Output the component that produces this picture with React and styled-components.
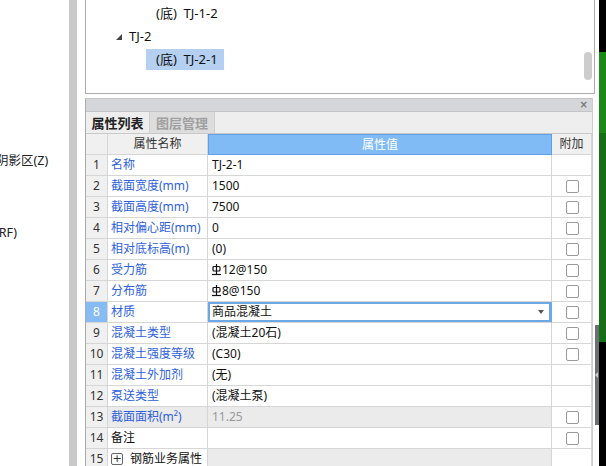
import React from 'react';
import styled, { createGlobalStyle, css } from 'styled-components';

const GlobalStyle = createGlobalStyle`
  html, body {
    margin: 0;
    padding: 0;
    width: 606px;
    height: 466px;
    overflow: hidden;
    background: #fff;
  }
  body {
    font-family: "Noto Sans", "Noto Sans CJK SC", sans-serif;
    font-size: 13px;
    color: #111;
  }
`;

const Page = styled.div`
  display: flex;
  width: 606px;
  height: 466px;
  overflow: hidden;
  background: #fff;
`;

const LeftPane = styled.div`
  width: 69px;
  flex-shrink: 0;
  overflow: hidden;
  display: flex;
  flex-direction: column;
  padding-top: 152px;
  gap: 54px;
  box-sizing: border-box;
`;

const CutLabel = styled.div`
  white-space: nowrap;
  font-size: 12.5px;
  line-height: 18px;
  color: #222;
  margin-left: ${(p) => p.$shift}px;
`;

const Splitter = styled.div`
  width: 8px;
  flex-shrink: 0;
  background: #c9c9c9;
`;

const Gutter = styled.div`
  width: 8px;
  flex-shrink: 0;
`;

const Main = styled.div`
  width: 510px;
  flex-shrink: 0;
  display: flex;
  flex-direction: column;
  gap: 4px;
`;

const TreePanel = styled.div`
  position: relative;
  height: 94px;
  flex-shrink: 0;
  box-sizing: border-box;
  border: 1px solid #ababab;
  border-top: none;
  padding-top: 2px;
`;

const TreeItem = styled.div`
  height: 23px;
  display: flex;
  align-items: center;
  padding-left: ${(p) => p.$indent}px;
  white-space: nowrap;
  line-height: 21px;
`;

const TreeLabel = styled.span`
  height: 21px;
  padding: 0 6px 0 10px;
  background: ${(p) => (p.$selected ? '#b4cff0' : 'transparent')};
`;

const Expander = styled.svg`
  width: 6px;
  height: 6px;
  margin-right: 7px;
`;

const ScrollThumb = styled.div`
  position: absolute;
  right: 2px;
  top: 52px;
  width: 8px;
  height: 28px;
  border-radius: 4px;
  background: #cdcdcd;
`;

const PropPanel = styled.div`
  flex: 1;
  margin-right: 2px;
  border-left: 1px solid #ababab;
  border-right: 1px solid #cdcdcd;
  border-top: 1px solid #c6c6c6;
  display: flex;
  flex-direction: column;
  overflow: hidden;
`;

const TitleBar = styled.div`
  height: 12px;
  flex-shrink: 0;
  background: #d5d6da;
  border-bottom: 1px solid #c4c5c9;
  display: flex;
  justify-content: flex-end;
  align-items: center;
  padding-right: 4px;
`;

const CloseMark = styled.span`
  font-family: "DejaVu Sans", sans-serif;
  font-size: 10px;
  line-height: 10px;
  color: #777;
  font-weight: bold;
`;

const TabRow = styled.div`
  height: 21px;
  flex-shrink: 0;
  display: flex;
  background: #eeeeee;
`;

const Tab = styled.div`
  width: ${(p) => p.$w}px;
  box-sizing: border-box;
  border-right: 1px solid #cfcfcf;
  display: flex;
  align-items: center;
  justify-content: center;
  font-size: 13px;
  font-weight: 600;
  color: ${(p) => (p.$active ? '#222' : '#a0a0a0')};
  background: ${(p) => (p.$active ? '#eeeeee' : '#dddddd')};
`;

const Table = styled.div`
  display: grid;
  grid-template-columns: 22px 100px 344px 40px;
  grid-auto-rows: 21px;
  border-top: 1px solid #c9c9c9;
  font-size: 12px;
`;

const cellBase = css`
  box-sizing: border-box;
  border-right: 1px solid #d6d6d6;
  border-bottom: 1px solid #d6d6d6;
  display: flex;
  align-items: center;
  white-space: nowrap;
  overflow: hidden;
  line-height: 18px;
`;

const HeadCell = styled.div`
  ${cellBase}
  justify-content: center;
  background: ${(p) => (p.$blue ? '#80bbf6' : '#f0f0f0')};
  color: ${(p) => (p.$blue ? '#fff' : '#333')};
  ${(p) => p.$blue && css`border: 1px solid #5e9fe6;`}
`;

const NumCell = styled.div`
  ${cellBase}
  justify-content: center;
  font-size: 12px;
  background: ${(p) => (p.$selected ? '#86bcf3' : '#f0f0f0')};
  color: ${(p) => (p.$selected ? '#fff' : '#333')};
`;

const NameCell = styled.div`
  ${cellBase}
  padding-left: 3px;
  color: ${(p) => (p.$plain ? '#111' : '#2f5fdc')};
  background: ${(p) => (p.$gray ? '#ebebeb' : '#fff')};
`;

const ValueCell = styled.div`
  ${cellBase}
  position: relative;
  padding-left: 4px;
  color: ${(p) => (p.$gray ? '#9a9a9a' : '#111')};
  background: ${(p) => (p.$gray ? '#ebebeb' : '#fff')};
  ${(p) =>
    p.$editing &&
    css`
      box-shadow: inset 0 0 0 2px #6ca8e6;
      border-right-color: #6ca8e6;
    `}
`;

const DropArrow = styled.span`
  position: absolute;
  right: 7px;
  top: 8px;
  width: 0;
  height: 0;
  border-left: 3px solid transparent;
  border-right: 3px solid transparent;
  border-top: 4px solid #555;
`;

const AddCell = styled.div`
  ${cellBase}
  justify-content: center;
  background: #fff;
`;

const CheckBox = styled.span`
  width: 13px;
  height: 13px;
  box-sizing: border-box;
  border: 1px solid #9a9a9a;
  border-radius: 2px;
  margin-left: 1px;
`;

const PlusBox = styled.span`
  width: 12px;
  height: 12px;
  box-sizing: border-box;
  border: 1px solid #666;
  border-radius: 2px;
  display: flex;
  align-items: center;
  justify-content: center;
  font-family: "DejaVu Sans", sans-serif;
  font-size: 11px;
  line-height: 10px;
  color: #333;
  margin-right: 7px;
`;

const BarMark = styled.svg`
  width: 9px;
  height: 12px;
  margin-right: 1px;
`;

const RightEdge = styled.div`
  display: flex;
  flex-shrink: 0;
  width: 11px;
`;

const SideSplit = styled.div`
  width: 4px;
  display: flex;
  flex-direction: column;
`;

const SplitHandle = styled.div`
  margin-top: 325px;
  height: 100px;
  background: #6b7075;
  display: flex;
  align-items: center;
`;

const HandleArrow = styled.span`
  width: 0;
  height: 0;
  border-top: 3px solid transparent;
  border-bottom: 3px solid transparent;
  border-right: 3px solid #c8ccd0;
`;

const ColorStrip = styled.div`
  width: 7px;
  display: flex;
  flex-direction: column;
`;

const Band = styled.div`
  height: ${(p) => p.$h}px;
  flex-shrink: 0;
  background: ${(p) => p.$c};
  ${(p) => p.$grow && 'flex: 1;'}
`;

const RebarMark = () => (
  <BarMark viewBox="0 0 9 12">
    <rect x="1" y="2.5" width="7" height="4.5" rx="1" fill="none" stroke="#111" strokeWidth="1.2" />
    <line x1="4.5" y1="0" x2="4.5" y2="10" stroke="#111" strokeWidth="1.2" />
    <line x1="0" y1="10.5" x2="9" y2="10.5" stroke="#111" strokeWidth="1.2" />
  </BarMark>
);

const rows = [
  { n: 1, name: '名称', value: 'TJ-2-1', check: false },
  { n: 2, name: '截面宽度(mm)', value: '1500', check: true },
  { n: 3, name: '截面高度(mm)', value: '7500', check: true },
  { n: 4, name: '相对偏心距(mm)', value: '0', check: true },
  { n: 5, name: '相对底标高(m)', value: '(0)', check: true },
  { n: 6, name: '受力筋', value: '12@150', rebar: true, check: true },
  { n: 7, name: '分布筋', value: '8@150', rebar: true, check: true },
  { n: 8, name: '材质', value: '商品混凝土', check: true, editing: true },
  { n: 9, name: '混凝土类型', value: '(混凝土20石)', check: true },
  { n: 10, name: '混凝土强度等级', value: '(C30)', check: true },
  { n: 11, name: '混凝土外加剂', value: '(无)', check: false },
  { n: 12, name: '泵送类型', value: '(混凝土泵)', check: false },
  { n: 13, name: '截面面积(m²)', value: '11.25', check: true, gray: true },
  { n: 14, name: '备注', value: '', check: true, plain: true },
  { n: 15, name: '钢筋业务属性', value: '', check: false, plain: true, group: true },
];

const App = () => (
  <Page>
    <GlobalStyle />
    <LeftPane>
      <CutLabel $shift={-4}>阴影区(Z)</CutLabel>
      <CutLabel $shift={-5}>(RF)</CutLabel>
    </LeftPane>
    <Splitter />
    <Gutter />
    <Main>
      <TreePanel>
        <TreeItem $indent={60}>
          <TreeLabel>(底)&nbsp;&nbsp;TJ-1-2</TreeLabel>
        </TreeItem>
        <TreeItem $indent={30}>
          <Expander viewBox="0 0 6 6">
            <path d="M6 0 L6 6 L0 6 Z" fill="#444" />
          </Expander>
          TJ-2
        </TreeItem>
        <TreeItem $indent={60}>
          <TreeLabel $selected>(底)&nbsp;&nbsp;TJ-2-1</TreeLabel>
        </TreeItem>
        <ScrollThumb />
      </TreePanel>
      <PropPanel>
        <TitleBar>
          <CloseMark>×</CloseMark>
        </TitleBar>
        <TabRow>
          <Tab $w={64} $active>属性列表</Tab>
          <Tab $w={65}>图层管理</Tab>
        </TabRow>
        <Table>
          <HeadCell />
          <HeadCell>属性名称</HeadCell>
          <HeadCell $blue>属性值</HeadCell>
          <HeadCell>附加</HeadCell>
          {rows.map((r) => (
            <React.Fragment key={r.n}>
              <NumCell $selected={r.editing}>{r.n}</NumCell>
              <NameCell $plain={r.plain} $gray={r.gray}>
                {r.group && <PlusBox>+</PlusBox>}
                {r.name}
              </NameCell>
              <ValueCell $gray={r.gray || r.group} $editing={r.editing}>
                {r.rebar && <RebarMark />}
                {r.value}
                {r.editing && <DropArrow />}
              </ValueCell>
              <AddCell>{r.check && <CheckBox />}</AddCell>
            </React.Fragment>
          ))}
        </Table>
      </PropPanel>
    </Main>
    <RightEdge>
      <SideSplit>
        <SplitHandle>
          <HandleArrow />
        </SplitHandle>
      </SideSplit>
      <ColorStrip>
        <Band $h={52} $c="#000" />
        <Band $h={81} $c="#1a891a" />
        <Band $h={209} $c="#166f16" />
        <Band $grow $c="#000" />
      </ColorStrip>
    </RightEdge>
  </Page>
);

export default App;
